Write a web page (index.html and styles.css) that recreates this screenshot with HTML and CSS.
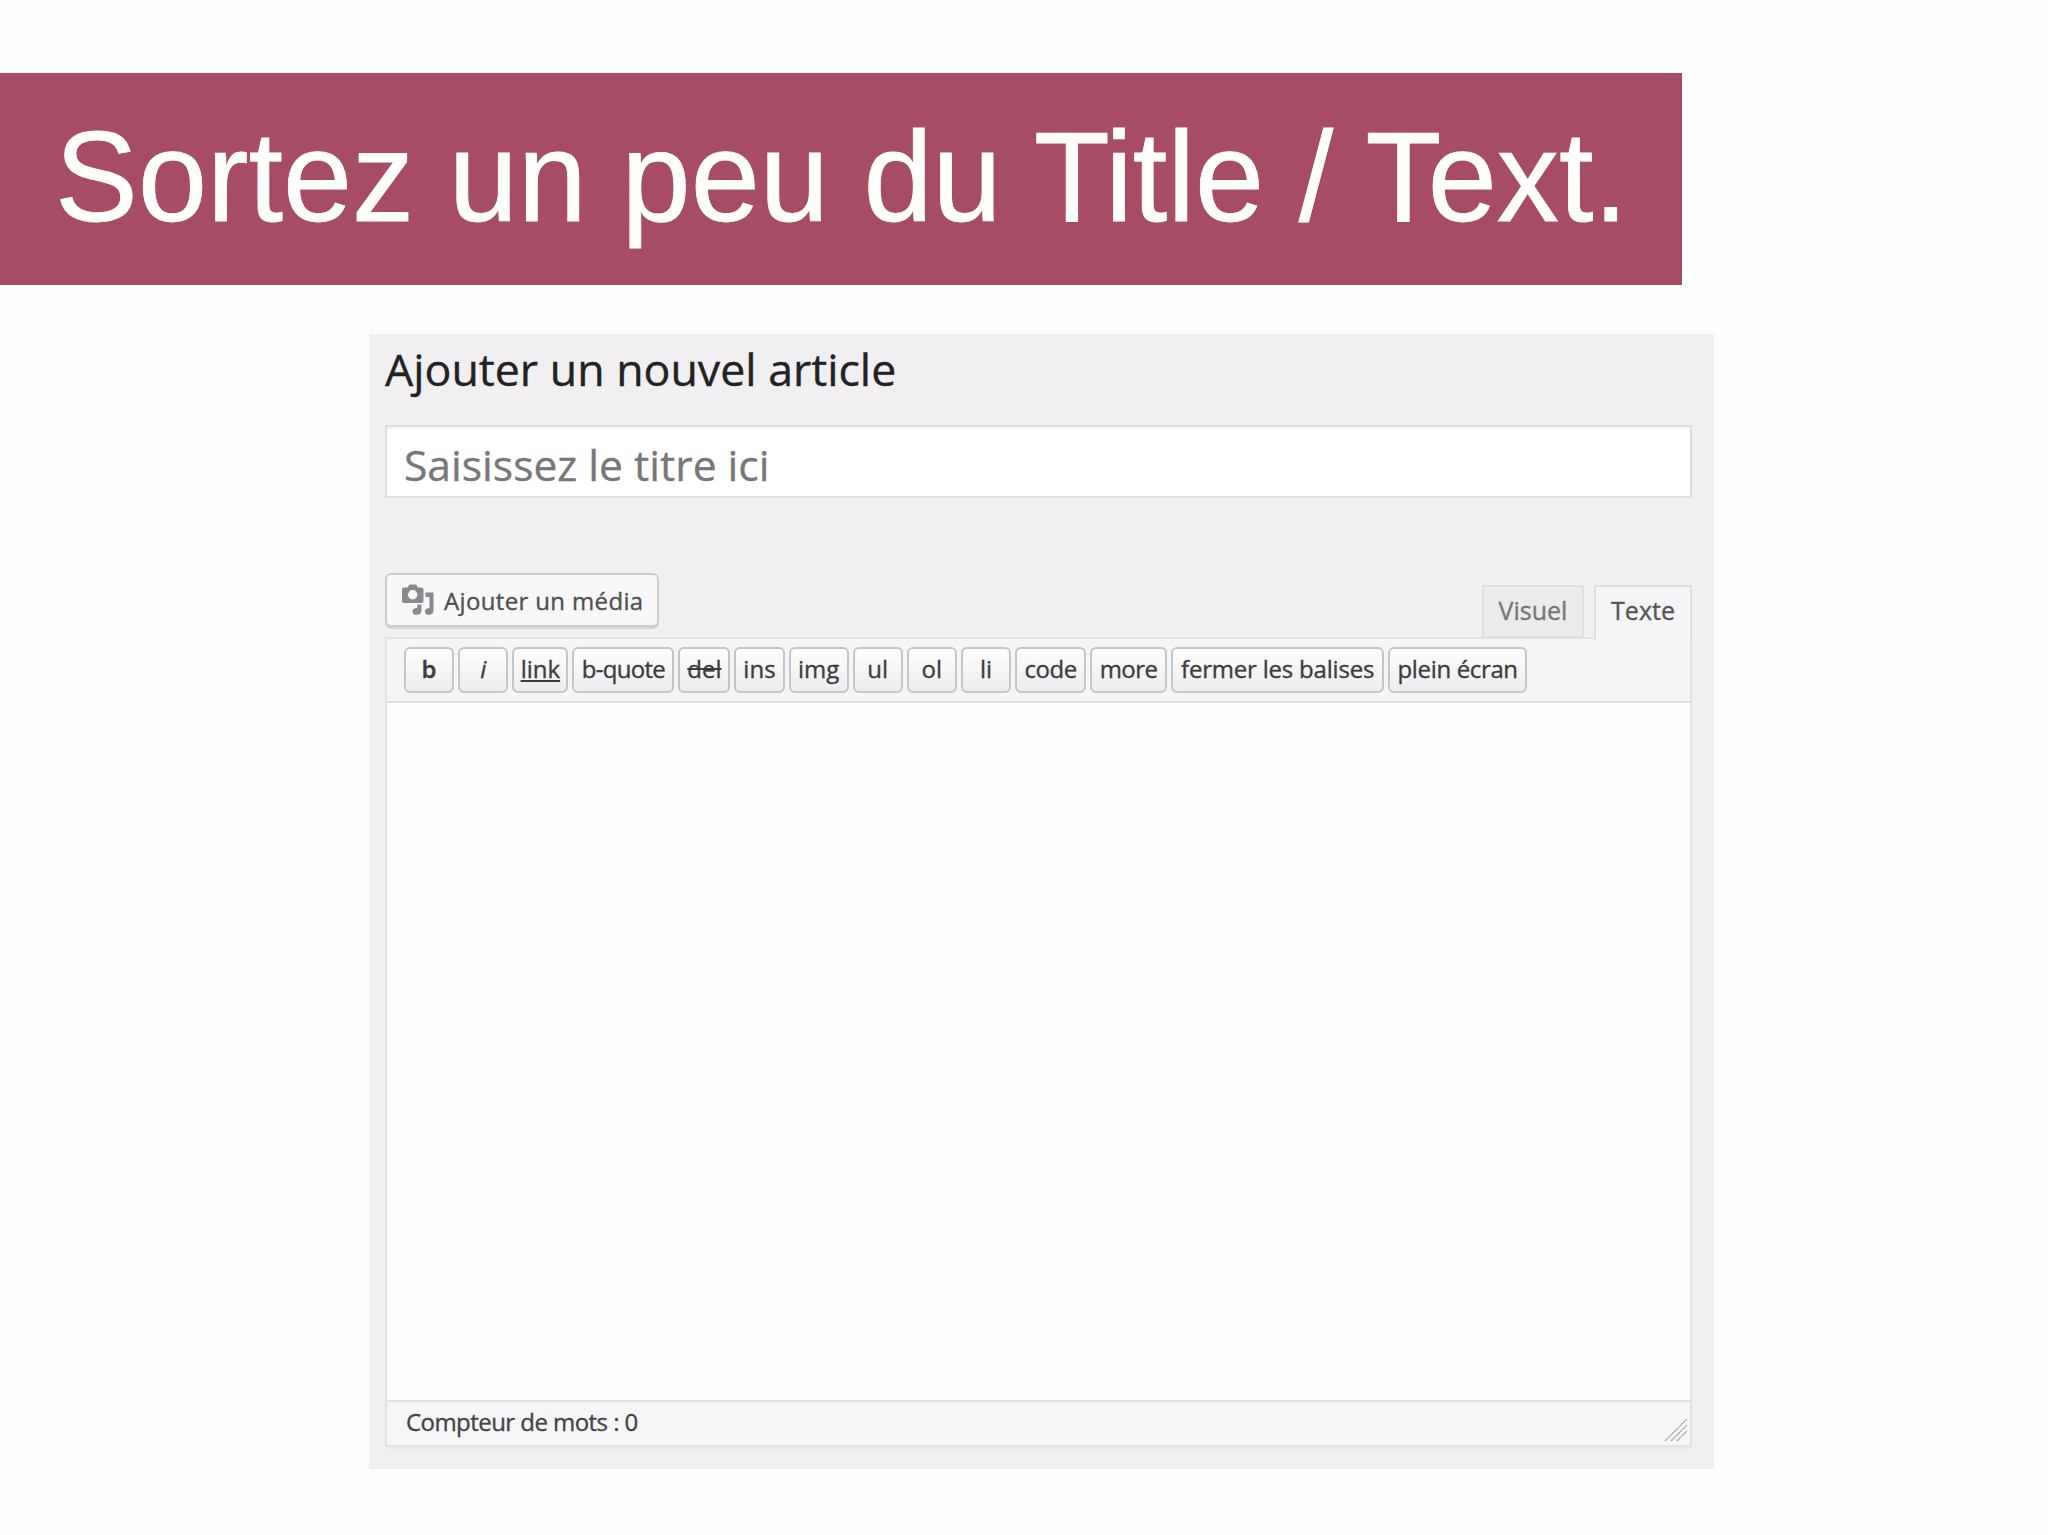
FILE: index.html
```
<!DOCTYPE html>
<html lang="fr">
<head>
  <meta charset="UTF-8" />
  <meta name="viewport" content="width=device-width, initial-scale=1.0" />
  <title>Sortez un peu du Title / Text.</title>
  <link rel="stylesheet" href="styles.css">
</head>
<body>
  <header class="banner">
    <h1>Sortez un peu du Title / Text.</h1>
  </header>

  <main class="panel">
    <h2>Ajouter un nouvel article</h2>
    <div class="title-field">Saisissez le titre ici</div>

    <div class="editor-head">
      <button class="media-button" type="button">
        <svg width="32" height="32" viewBox="0 0 32 32" fill="#8a8a8e">
          <path fill-rule="evenodd" d="M2 3.500h3.500L7.500 0.500h6.500l2 3h3.500q2 0 2 2V17q0 2-2 2H2q-2 0-2-2V5.500q0-2 2-2zM10.700 6a4.700 4.700 0 1 0 0 9.400a4.700 4.700 0 1 0 0-9.400z" />
          <path d="M23.500 8.500h8V26q0 4.800-4.500 4.800q-4 0-4-3.400q0-3.500 4.500-3.500V13h-4z" />
          <path d="M15.500 20.500h4V26q0 4.800-4.500 4.800q-4.500 0-4.500-3.400q0-3.500 4.500-3.500z" />
        </svg>
        <span>Ajouter un média</span>
      </button>
      <div class="tabs">
        <div class="tab">Visuel</div>
        <div class="tab active">Texte</div>
      </div>
    </div>

    <div class="editor">
      <div class="toolbar">
        <button class="bold" type="button">b</button>
        <button class="italic" type="button">i</button>
        <button class="link w-link" type="button">link</button>
        <button class="w-quote" type="button">b-quote</button>
        <button class="del w-del" type="button">del</button>
        <button type="button">ins</button>
        <button class="w-img" type="button">img</button>
        <button type="button">ul</button>
        <button type="button">ol</button>
        <button type="button">li</button>
        <button class="w-code" type="button">code</button>
        <button class="w-more" type="button">more</button>
        <button class="w-close" type="button">fermer les balises</button>
        <button class="w-full" type="button">plein écran</button>
      </div>
      <div class="textarea"></div>
      <div class="status">
        <span>Compteur de mots : 0</span>
        <svg class="grip" width="24" height="24" viewBox="0 0 24 24" stroke="#aaa" stroke-width="1.500" stroke-dasharray="2 .6">
          <path d="M1 23L23 1M7 23L23 7M13 23L23 13" />
        </svg>
      </div>
    </div>
  </main>
</body>
</html>
```

FILE: styles.css
```
* {
  box-sizing: border-box;
}

body {
  margin: 0;
  padding-top: 73px;
  height: 1535px;
  overflow: hidden;
  background-color: #fefefe;
  font-family: "Open Sans", "Noto Sans", sans-serif;
}

.banner {
  width: 1682px;
  height: 212px;
  padding-left: 55px;
  background-color: #a64c65;
}

.banner h1 {
  margin: 0;
  color: #fffffd;
  font-family: "Liberation Sans", Arial, sans-serif;
  font-size: 128px;
  font-weight: 400;
  line-height: 207px;
  white-space: nowrap;
  transform: scaleX(0.971);
  transform-origin: left;
  -webkit-text-stroke: 0.8px #fffffd;
}

.panel {
  width: 1345px;
  height: 1135px;
  margin: 49px 0 0 369px;
  padding: 0 22px 0 16px;
  background-color: #f1eff2;
  -webkit-text-stroke: 0.35px currentColor;
}

.panel h2 {
  margin: 0;
  height: 91px;
  color: #222;
  font-size: 44.700px;
  font-weight: 400;
  line-height: 70px;
  white-space: nowrap;
}

.title-field {
  height: 73px;
  padding-left: 17px;
  border: 2px solid #dedde0;
  background-color: #fff;
  box-shadow: inset 0 2px 3px rgba(0, 0, 0, 0.05);
  color: #777;
  font-size: 42.600px;
  line-height: 75px;
  white-space: nowrap;
}

.editor-head {
  display: flex;
  justify-content: space-between;
  height: 139px;
  padding-top: 75px;
}

.media-button {
  display: flex;
  align-items: center;
  width: 274px;
  height: 54px;
  padding: 0 0 0 15px;
  border: 2px solid #ccc;
  border-radius: 6px;
  background-color: #f8f7f9;
  box-shadow: 0 2px 1px rgba(0, 0, 0, 0.12);
  color: #505050;
  font-family: inherit;
  font-size: 24px;
  letter-spacing: 0.35px;
  white-space: nowrap;
}

.media-button svg {
  margin-right: 10px;
}

.tabs {
  display: flex;
  gap: 10px;
  padding-top: 12px;
}

.tab {
  width: 102px;
  height: 53px;
  border: 2px solid #dfdee0;
  background-color: #ebeaec;
  color: #777;
  font-size: 25px;
  line-height: 47px;
  text-align: center;
}

/* the active tab runs into the toolbar below */
.tab.active {
  position: relative;
  width: 98px;
  height: 55px;
  border-bottom: 0;
  background-color: #f5f4f6;
  color: #555;
}

.editor {
  height: 810px;
  border: 2px solid #e2e1e4;
  box-shadow: 0 2px 2px rgba(0, 0, 0, 0.03);
}

.toolbar {
  display: flex;
  gap: 4px;
  height: 64px;
  padding: 8px 0 0 17px;
  border-bottom: 2px solid #dedde0;
  background-color: #f5f4f6;
}

.toolbar button {
  width: 50.2px;
  height: 46px;
  padding: 0 0 3px;
  border: 2px solid #c5c5c8;
  border-radius: 6px;
  background: linear-gradient(#fefefe, #ececee);
  color: #3c3c3c;
  font-family: inherit;
  font-size: 24px;
  line-height: 30px;
  white-space: nowrap;
}

.toolbar .bold {
  font-weight: 600;
}

.toolbar .italic {
  font-style: italic;
}

.toolbar .link {
  text-decoration: underline;
}

.toolbar .del {
  text-decoration: line-through;
}

.toolbar .w-link { width: 56px; }
.toolbar .w-quote { width: 102px; letter-spacing: -0.700px; }
.toolbar .w-del { width: 52px; }
.toolbar .w-img { width: 60px; }
.toolbar .w-code { width: 71px; letter-spacing: -0.400px; }
.toolbar .w-more { width: 77px; letter-spacing: -0.500px; }
.toolbar .w-close { width: 213px; letter-spacing: -0.200px; }
.toolbar .w-full { width: 139px; letter-spacing: -0.350px; }

.textarea {
  height: 697px;
  background-color: #fefefe;
}

.status {
  display: flex;
  justify-content: space-between;
  height: 45px;
  padding: 0 2px 0 19px;
  border-top: 2px solid #e2e1e4;
  background-color: #f6f5f7;
  color: #444;
  font-size: 24px;
  letter-spacing: -0.550px;
  line-height: 40px;
}

.grip {
  margin-top: 16px;
}
```
